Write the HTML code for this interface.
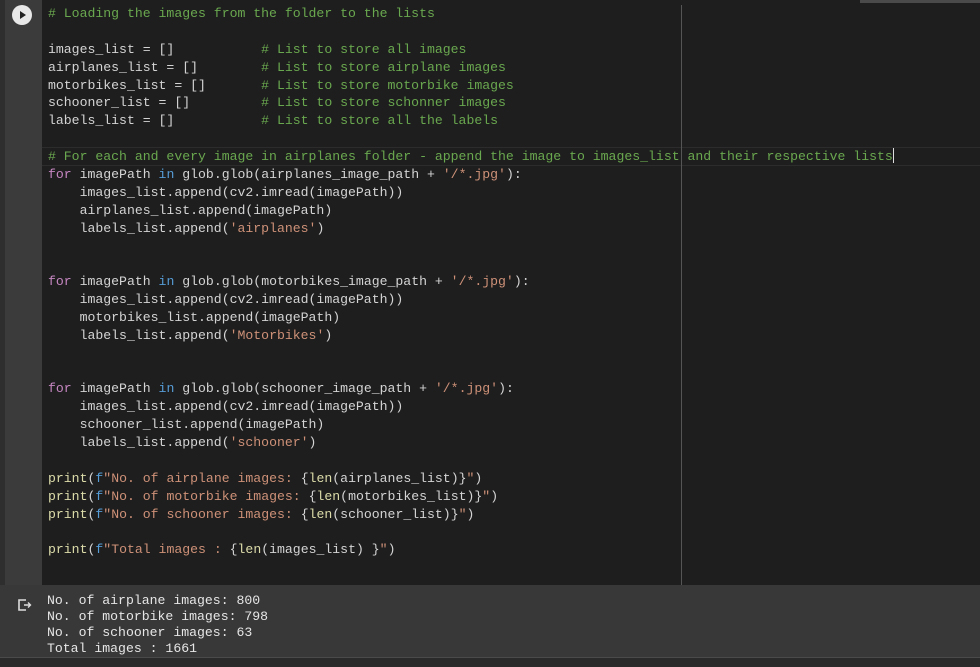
<!DOCTYPE html>
<html><head><meta charset="utf-8"><style>
html,body{margin:0;padding:0;width:980px;height:666px;overflow:hidden;background:#383838;font-family:"Liberation Mono",monospace;}
.cell{position:absolute;left:0;top:0;width:980px;height:585px;background:#1e1e1e;}
.edge{position:absolute;left:0;top:0;width:5px;height:585px;background:#2e2e2e;}
.gut{position:absolute;left:5px;top:0;width:37px;height:585px;background:#3b3b3b;}
.run{position:absolute;left:12px;top:5px;width:20px;height:20px;border-radius:50%;background:#e8e8e8;}
.run:after{content:"";position:absolute;left:8px;top:6px;border-left:6px solid #222;border-top:4px solid transparent;border-bottom:4px solid transparent;}
.ruler{position:absolute;left:681px;top:5px;width:1px;height:580px;background:#555;}
.hl{position:absolute;left:42px;top:147px;width:938px;height:17px;border-top:1px solid #2c2c2c;border-bottom:1px solid #2c2c2c;}
.topbox{position:absolute;left:860px;top:0;width:120px;height:3px;background:#4a4a4a;}
pre{margin:0;position:absolute;left:48px;top:5px;font-size:13.17px;line-height:17.87px;color:#d4d4d4;font-family:"Liberation Mono",monospace;}
.c{color:#6aa84f}.k{color:#c586c0}.b{color:#569cd6}.s{color:#ce9178}.y{color:#dcdcaa}
.cursor{display:inline-block;width:1px;height:15px;background:#ddd;vertical-align:-3px;}
.out{position:absolute;left:47px;top:593px;font-size:13.17px;line-height:16px;color:#e6e6e6;}
.oicon{position:absolute;left:17px;top:597px;}
.bar{position:absolute;left:0;top:657px;width:980px;height:9px;background:#2a2a2a;border-top:1px solid #4a4a4a;}
</style></head><body>
<div class="cell"></div><div class="edge"></div><div class="gut"></div><div class="run"></div>
<div class="topbox"></div><div class="hl"></div><div class="ruler"></div>
<pre><span class="c"># Loading the images from the folder to the lists</span>

images_list = []           <span class="c"># List to store all images</span>
airplanes_list = []        <span class="c"># List to store airplane images</span>
motorbikes_list = []       <span class="c"># List to store motorbike images</span>
schooner_list = []         <span class="c"># List to store schonner images</span>
labels_list = []           <span class="c"># List to store all the labels</span>

<span class="c"># For each and every image in airplanes folder - append the image to images_list and their respective lists</span><span class="cursor"></span>
<span class="k">for</span> imagePath <span class="b">in</span> glob.glob(airplanes_image_path + <span class="s">'/*.jpg'</span>):
    images_list.append(cv2.imread(imagePath))
    airplanes_list.append(imagePath)
    labels_list.append(<span class="s">'airplanes'</span>)


<span class="k">for</span> imagePath <span class="b">in</span> glob.glob(motorbikes_image_path + <span class="s">'/*.jpg'</span>):
    images_list.append(cv2.imread(imagePath))
    motorbikes_list.append(imagePath)
    labels_list.append(<span class="s">'Motorbikes'</span>)


<span class="k">for</span> imagePath <span class="b">in</span> glob.glob(schooner_image_path + <span class="s">'/*.jpg'</span>):
    images_list.append(cv2.imread(imagePath))
    schooner_list.append(imagePath)
    labels_list.append(<span class="s">'schooner'</span>)

<span class="y">print</span>(<span class="b">f</span><span class="s">"No. of airplane images: </span>{<span class="y">len</span>(airplanes_list)}<span class="s">"</span>)
<span class="y">print</span>(<span class="b">f</span><span class="s">"No. of motorbike images: </span>{<span class="y">len</span>(motorbikes_list)}<span class="s">"</span>)
<span class="y">print</span>(<span class="b">f</span><span class="s">"No. of schooner images: </span>{<span class="y">len</span>(schooner_list)}<span class="s">"</span>)

<span class="y">print</span>(<span class="b">f</span><span class="s">"Total images : </span>{<span class="y">len</span>(images_list) }<span class="s">"</span>)</pre>
<svg class="oicon" width="16" height="16" viewBox="0 0 16 16"><path d="M9 3H2v10h7" fill="none" stroke="#ddd" stroke-width="1.6"/><path d="M7 8h6M11 5.5l2.5 2.5-2.5 2.5" fill="none" stroke="#ddd" stroke-width="1.4"/></svg>
<pre class="out">No. of airplane images: 800
No. of motorbike images: 798
No. of schooner images: 63
Total images : 1661</pre>
<div class="bar"></div>
</body></html>
